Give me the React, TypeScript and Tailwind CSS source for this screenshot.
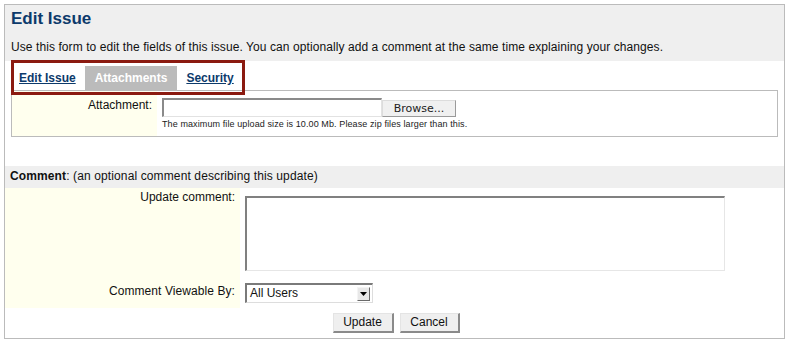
import React from "react";

export default function App() {
  return (
    <div className="w-[790px] h-[348px] bg-white pt-[4px] pl-[4px] font-['Liberation_Sans',Arial,sans-serif] text-[#111]">
      <div className="relative w-[781px] border border-[#bbbbbb]">
        {/* header */}
        <div className="h-[56px] bg-[#efefef] px-[6px] pt-[4px]">
          <h1 className="text-[17px] leading-[20px] font-bold text-[#0c3a6b]">Edit Issue</h1>
          <p className="mt-[11px] text-[12px] leading-[15px] tracking-[0.08px] text-[#111]">
            Use this form to edit the fields of this issue. You can optionally add a comment at the same time explaining your changes.
          </p>
        </div>

        {/* tabs + attachment */}
        <div className="px-[6px] pt-[5px]">
          <div className="flex h-[24px] items-stretch text-[12px] font-bold">
            <a className="flex items-center pl-[8px] pr-[8px] text-[#0c3a6b] underline">Edit Issue</a>
            <span className="ml-[1px] flex items-center bg-[#bbbbbb] px-[10px] text-white">Attachments</span>
            <a className="flex items-center pl-[9px] pr-[8px] text-[#0c3a6b] underline">Security</a>
          </div>
          <div className="flex border border-[#bbbbbb]">
            <div className="w-[145px] bg-[#ffffee] pr-[5px] pt-[7px] text-right text-[12px] leading-[15px]">
              Attachment:
            </div>
            <div className="pl-[5px] pt-[7px] pb-[6px]">
              <div className="flex items-start">
                <div className="h-[19px] w-[220px] border-t-2 border-l-2 border-r border-b border-t-[#8a8a8a] border-l-[#8a8a8a] border-r-[#e2e2e2] border-b-[#e2e2e2] bg-white" />
                <div className="mt-[2px] flex h-[17px] w-[74px] items-center justify-center border border-t-[#dcdcdc] border-l-[#dcdcdc] border-r-[#9a9a9a] border-b-[#9a9a9a] bg-[#f0f0f0] font-['DejaVu_Sans',sans-serif] text-[11px] leading-[13px] text-[#222]">
                  Browse...
                </div>
              </div>
              <div className="mt-[2px] text-[9px] leading-[11px] tracking-[0.1px] text-[#222]">
                The maximum file upload size is 10.00 Mb. Please zip files larger than this.
              </div>
            </div>
          </div>
        </div>

        {/* comment header */}
        <div className="mt-[29px] h-[22px] bg-[#efefef] pl-[5px] pt-[3px] text-[12px] leading-[15px] tracking-[0.12px]">
          <b>Comment</b>: (an optional comment describing this update)
        </div>

        {/* row 1 */}
        <div className="flex">
          <div className="w-[235px] bg-[#ffffee] pr-[5px] pt-[2px] text-right text-[12px] leading-[15px]">
            Update comment:
          </div>
          <div className="pl-[5px] pt-[8px] pb-[9px]">
            <div className="h-[75px] w-[480px] border-t-2 border-l-2 border-r border-b border-t-[#808080] border-l-[#808080] border-r-[#e6e6e6] border-b-[#e6e6e6] bg-white" />
          </div>
        </div>

        {/* row 2 */}
        <div className="flex">
          <div className="w-[235px] bg-[#ffffee] pr-[5px] pt-[4px] text-right text-[12px] leading-[15px] tracking-[0.08px]">
            Comment Viewable By:
          </div>
          <div className="pl-[5px] pt-[3px] pb-[5px]">
            <div className="flex h-[20px] w-[128px] items-center border-t-2 border-l-2 border-r border-b border-t-[#7a7a7a] border-l-[#7a7a7a] border-r-[#dddddd] border-b-[#dddddd] bg-white">
              <span className="pl-[3px] text-[12px] leading-[15px]">All Users</span>
              <span className="ml-auto mr-[2px] flex h-[14px] w-[13px] items-center justify-center border border-t-[#f4f4f4] border-l-[#f4f4f4] border-r-[#6a6a6a] border-b-[#6a6a6a] bg-[#e8e8e8]">
                <svg width="7" height="4" viewBox="0 0 7 4">
                  <polygon points="0,0 7,0 3.5,4" fill="#000" />
                </svg>
              </span>
            </div>
          </div>
        </div>

        {/* buttons */}
        <div className="flex justify-center gap-[6px] pt-[5px] pb-[5px] pl-[3px]">
          <div className="flex h-[20px] w-[61px] items-center justify-center border border-t-[#e4e4e4] border-l-[#e4e4e4] border-r-2 border-b-2 border-r-[#8a8a8a] border-b-[#8a8a8a] bg-[#efefef] text-[12px] leading-[15px]">
            Update
          </div>
          <div className="flex h-[20px] w-[60px] items-center justify-center border border-t-[#e4e4e4] border-l-[#e4e4e4] border-r-2 border-b-2 border-r-[#8a8a8a] border-b-[#8a8a8a] bg-[#efefef] text-[12px] leading-[15px]">
            Cancel
          </div>
        </div>

        {/* annotation frame */}
        <div className="pointer-events-none absolute left-[6px] top-[55px] h-[35px] w-[234px] border-[3px] border-[#8b1a10]" />
      </div>
    </div>
  );
}
